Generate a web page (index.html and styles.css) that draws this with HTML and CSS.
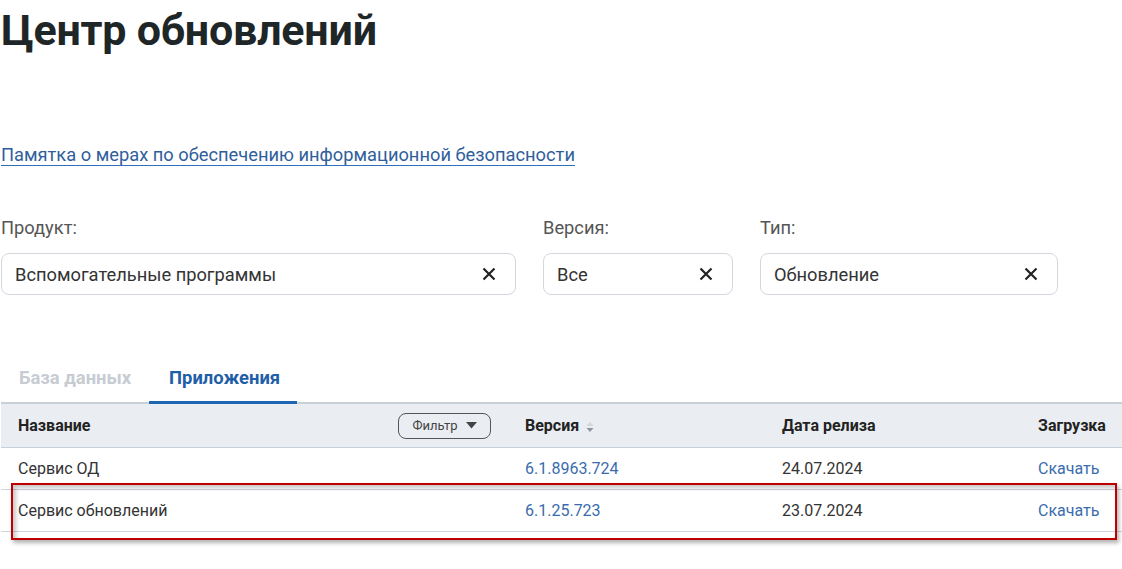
FILE: index.html
```html
<!DOCTYPE html>
<html lang="ru">
<head>
    <meta charset="UTF-8">
    <meta name="viewport" content="width=device-width, initial-scale=1.0">
    <link rel="stylesheet" href="styles.css">
    <title>Центр обновлений</title>
</head>
<body>
    <div class="page">
        <h1 class="title">Центр обновлений</h1>

        <a class="memo-link" href="#">Памятка о мерах по обеспечению информационной безопасности</a>

        <div class="filters">
            <div class="filter filter-product">
                <div class="filter-label">Продукт:</div>
                <div class="select">
                    <span>Вспомогательные программы</span>
                    <svg class="clear" width="14" height="14" viewBox="0 0 14 14"><path d="M1.5 1.5 L12.5 12.5 M12.5 1.5 L1.5 12.5" stroke="#222" stroke-width="2.2"/></svg>
                </div>
            </div>
            <div class="filter filter-version">
                <div class="filter-label">Версия:</div>
                <div class="select">
                    <span>Все</span>
                    <svg class="clear" width="14" height="14" viewBox="0 0 14 14"><path d="M1.5 1.5 L12.5 12.5 M12.5 1.5 L1.5 12.5" stroke="#222" stroke-width="2.2"/></svg>
                </div>
            </div>
            <div class="filter filter-type">
                <div class="filter-label">Тип:</div>
                <div class="select">
                    <span>Обновление</span>
                    <svg class="clear" width="14" height="14" viewBox="0 0 14 14"><path d="M1.5 1.5 L12.5 12.5 M12.5 1.5 L1.5 12.5" stroke="#222" stroke-width="2.2"/></svg>
                </div>
            </div>
        </div>

        <div class="tabs">
            <a class="tab" href="#">База данных</a>
            <a class="tab active" href="#">Приложения</a>
        </div>

        <div class="table-wrap">
            <table class="releases">
                <thead>
                    <tr>
                        <th class="col-name">
                            <div class="name-head">
                                <span>Название</span>
                                <button class="filter-btn">Фильтр
                                    <svg width="11" height="7" viewBox="0 0 11 7"><path d="M0 0 L11 0 L5.5 6.5 Z" fill="#444"/></svg>
                                </button>
                            </div>
                        </th>
                        <th class="col-version">Версия
                            <svg class="sort" width="8" height="14" viewBox="0 0 8 14"><path d="M4 2 L7.5 6 L0.5 6 Z" fill="#d3d7dc"/><path d="M4 12 L7.5 8 L0.5 8 Z" fill="#8e959c"/></svg>
                        </th>
                        <th class="col-date">Дата релиза</th>
                        <th class="col-load">Загрузка</th>
                    </tr>
                </thead>
                <tbody>
                    <tr>
                        <td>Сервис ОД</td>
                        <td><a href="#">6.1.8963.724</a></td>
                        <td>24.07.2024</td>
                        <td><a href="#">Скачать</a></td>
                    </tr>
                    <tr>
                        <td>Сервис обновлений</td>
                        <td><a href="#">6.1.25.723</a></td>
                        <td>23.07.2024</td>
                        <td><a href="#">Скачать</a></td>
                    </tr>
                </tbody>
            </table>
            <div class="mark-frame"></div>
        </div>
    </div>
</body>
</html>
```

FILE: styles.css
```css
body {
    font-family: Roboto, "Noto Sans", sans-serif;
    margin: 0;
    padding: 0;
    background-color: #fff;
    color: #333;
    min-height: 569px;
}

.page {
    padding-left: 1px;
    padding-bottom: 30px;
}

.title {
    font-size: 43px;
    font-weight: bold;
    color: #1f2628;
    margin: 0;
    padding-top: 4px;
    line-height: 52px;
    letter-spacing: -0.2px;
}

.memo-link {
    display: inline-block;
    margin-top: 89px;
    font-size: 18.3px;
    color: #2f5e9c;
    text-decoration: none;
    border-bottom: 1px solid #2f6fb8;
    line-height: 20px;
}

.filters {
    display: flex;
    margin-top: 52px;
}

.filter-label {
    font-size: 18.3px;
    color: #555;
    line-height: 20px;
    margin-bottom: 15px;
}

.filter-product {
    width: 515px;
    margin-right: 27px;
}

.filter-version {
    width: 190px;
    margin-right: 27px;
}

.filter-type {
    width: 298px;
}

.select {
    display: flex;
    align-items: center;
    justify-content: space-between;
    height: 40px;
    border: 1px solid #d3d8de;
    border-radius: 8px;
    padding: 0 19px 0 13px;
    font-size: 18.3px;
    color: #333;
}

.tabs {
    display: flex;
    margin-top: 72px;
    padding-left: 18px;
    border-bottom: 3px solid #c9d0d8;
}

.tab {
    font-size: 18.4px;
    font-weight: bold;
    text-decoration: none;
    color: #c7ccd3;
    line-height: 22px;
    padding-bottom: 12px;
}

.tab.active {
    color: #1f5fa8;
    margin-left: 18px;
    padding: 0 17px 12px 20px;
    border-bottom: 4px solid #1f66b3;
    margin-bottom: -3px;
}

.table-wrap {
    position: relative;
    margin-top: -1px;
}

.releases {
    width: 1121px;
    border-collapse: collapse;
    font-size: 16px;
}

.releases th {
    background-color: #eaedf1;
    text-align: left;
    font-weight: bold;
    color: #222;
    height: 43px;
    padding: 0 0 0 17px;
    border-bottom: 1px solid #c8d0d9;
}

.releases td {
    height: 41px;
    padding: 0 0 0 17px;
    border-bottom: 1px solid #cfd5dc;
    color: #333;
}

.releases td a {
    color: #3a6cad;
    text-decoration: none;
}

.col-name {
    width: 490px;
}

.col-version {
    width: 240px;
}

.col-date {
    width: 239px;
}

.name-head {
    display: flex;
    align-items: center;
    justify-content: space-between;
    padding-right: 17px;
}

.filter-btn {
    font-family: Roboto, sans-serif;
    font-size: 13px;
    color: #444;
    background: transparent;
    border: 1px solid #555;
    border-radius: 8px;
    height: 26px;
    width: 93px;
    display: flex;
    align-items: center;
    justify-content: center;
    gap: 8px;
    padding: 0;
}

.sort {
    vertical-align: middle;
    margin-left: 3px;
}

.mark-frame {
    position: absolute;
    left: 10px;
    top: 79px;
    width: 1102px;
    height: 53px;
    border: 2px solid #c00000;
    box-shadow: 2px 3px 4px rgba(0, 0, 0, 0.3), inset 3px 3px 4px rgba(0, 0, 0, 0.22);
}
```
